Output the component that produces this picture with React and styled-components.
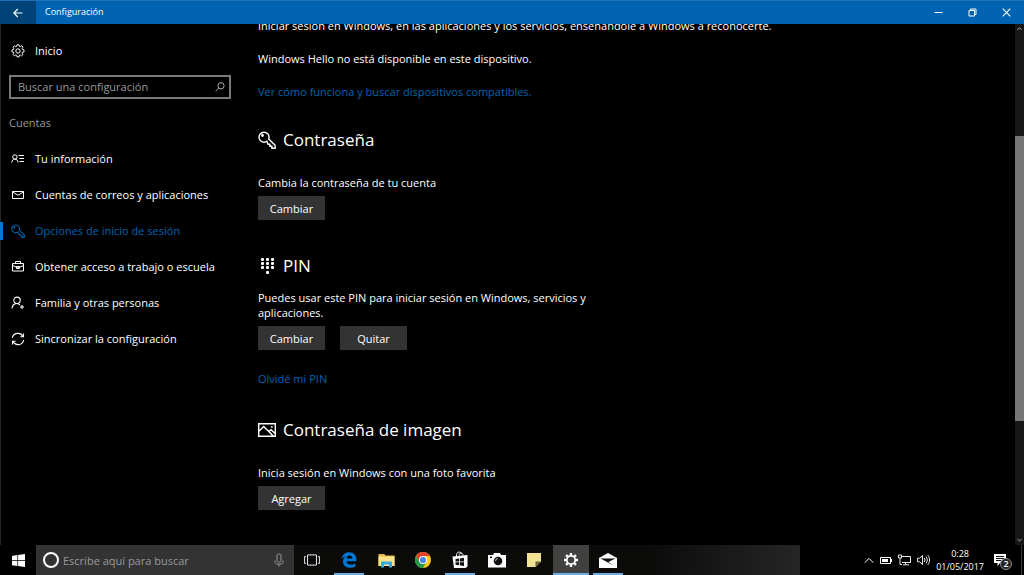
import React from "react";
import styled, { createGlobalStyle } from "styled-components";

const navItems = [
    { label: "Tu información", icon: <InfoIcon /> },
    { label: "Cuentas de correos y aplicaciones", icon: <EnvelopeIcon /> },
    { label: "Opciones de inicio de sesión", icon: <KeyIcon />, active: true },
    { label: "Obtener acceso a trabajo o escuela", icon: <BriefcaseIcon /> },
    { label: "Familia y otras personas", icon: <PersonAddIcon /> },
    { label: "Sincronizar la configuración", icon: <SyncIcon /> },
];

const apps = [
    { name: "Microsoft Edge", icon: <EdgeIcon />, open: true },
    { name: "Explorador de archivos", icon: <FolderIcon /> },
    { name: "Google Chrome", icon: <ChromeIcon /> },
    { name: "Tienda", icon: <StoreIcon />, open: true },
    { name: "Cámara", icon: <CameraIcon /> },
    { name: "Notas rápidas", icon: <NoteIcon /> },
    { name: "Configuración", icon: <CogIcon />, open: true, focused: true },
    { name: "Correo", icon: <MailAppIcon />, open: true },
];

export default function App() {
    return (
        <Desktop>
            <GlobalStyle />
            <TitleBar>
                <BackButton aria-label="Atrás"><BackIcon /></BackButton>
                <Title>Configuración</Title>
                <WindowButton aria-label="Minimizar"><MinimizeIcon /></WindowButton>
                <WindowButton aria-label="Restaurar"><RestoreIcon /></WindowButton>
                <WindowButton aria-label="Cerrar"><CloseIcon /></WindowButton>
            </TitleBar>
            <Body>
                <Sidebar>
                    <NavLink href="#inicio"><GearIcon /><span>Inicio</span></NavLink>
                    <SearchBox>
                        <input type="text" aria-label="Buscar una configuración" placeholder="Buscar una configuración" />
                        <SearchIcon />
                    </SearchBox>
                    <Category>Cuentas</Category>
                    <nav>
                        {navItems.map(i =>
                            <NavLink key={i.label} href="#cuentas" $active={i.active}>{i.icon}<span>{i.label}</span></NavLink>
                        )}
                    </nav>
                </Sidebar>
                <Main>
                    <Hello>
                        <Text $wide>Iniciar sesión en Windows, en las aplicaciones y los servicios, enseñándole a Windows a reconocerte.</Text>
                        <Text>Windows Hello no está disponible en este dispositivo.</Text>
                        <Link href="#hello">Ver cómo funciona y buscar dispositivos compatibles.</Link>
                    </Hello>
                    <Section>
                        <Heading><KeyIcon />Contraseña</Heading>
                        <Text>Cambia la contraseña de tu cuenta</Text>
                        <Actions><Button>Cambiar</Button></Actions>
                    </Section>
                    <Section $compact>
                        <Heading><KeypadIcon />PIN</Heading>
                        <Text>Puedes usar este PIN para iniciar sesión en Windows, servicios y aplicaciones.</Text>
                        <Actions><Button>Cambiar</Button><Button>Quitar</Button></Actions>
                        <Link href="#pin">Olvidé mi PIN</Link>
                    </Section>
                    <Section>
                        <Heading><PictureIcon />Contraseña de imagen</Heading>
                        <Text>Inicia sesión en Windows con una foto favorita</Text>
                        <Actions><Button>Agregar</Button></Actions>
                    </Section>
                </Main>
                <ScrollBar>
                    <ChevronIcon />
                    <ScrollTrack><ScrollThumb /></ScrollTrack>
                    <ChevronIcon down />
                </ScrollBar>
            </Body>
            <TaskBar>
                <StartButton aria-label="Inicio"><WindowsIcon /></StartButton>
                <Cortana>
                    <CortanaRing />
                    <input type="text" aria-label="Escribe aquí para buscar" placeholder="Escribe aquí para buscar" />
                    <MicIcon />
                </Cortana>
                <AppList>
                    <TaskButton aria-label="Vista de tareas"><TaskViewIcon /></TaskButton>
                    {apps.map(a =>
                        <TaskButton key={a.name} aria-label={a.name} $open={a.open} $focused={a.focused}>{a.icon}</TaskButton>
                    )}
                </AppList>
                <Tray>
                    <TrayChevron />
                    <BatteryIcon />
                    <NetworkIcon />
                    <VolumeIcon />
                    <Clock><span>0:28</span><span>01/05/2017</span></Clock>
                    <Notifications aria-label="Notificaciones">
                        <NoticeIcon />
                        <Badge>2</Badge>
                    </Notifications>
                    <ShowDesktop aria-label="Mostrar escritorio" />
                </Tray>
            </TaskBar>
        </Desktop>
    )
}

function BackIcon() {
    return (
        <svg width="10" height="10" viewBox="0 0 10 10" fill="none" stroke="currentColor" strokeWidth="1.1">
            <path d="M.8 5H9.5M4.8 1 .8 5l4 4" />
        </svg>
    )
}

function MinimizeIcon() {
    return (
        <svg width="9" height="9" viewBox="0 0 9 9" stroke="currentColor"><path d="M.5 4.5h8" /></svg>
    )
}

function RestoreIcon() {
    return (
        <svg width="9" height="9" viewBox="0 0 9 9" fill="none" stroke="currentColor">
            <path d="M1 2.5h5.5v5.5H1zM2.5 2.5V1h5.5v5.5H6.5" />
        </svg>
    )
}

function CloseIcon() {
    return (
        <svg width="9" height="9" viewBox="0 0 9 9" stroke="currentColor" strokeWidth="1.1"><path d="m.7.7 7.6 7.6M8.3.7.7 8.3" /></svg>
    )
}

function GearIcon() {
    return (
        <svg viewBox="0 0 14 14" fill="none" stroke="currentColor">
            <circle cx="7" cy="7" r="2.2" />
            <path d="m5.7 2.3.3-1.5h2l.3 1.5 1 .4 1.3-.9 1.4 1.4-.9 1.3.4 1 1.5.4v2l-1.5.3-.4 1 .9 1.3-1.4 1.4-1.3-.9-1 .4-.3 1.5H6l-.3-1.5-1-.4-1.3.9L2 10.5l.9-1.3-.4-1L1 7.9v-2l1.5-.4.4-1L2 3.2l1.4-1.4 1.3.9z" />
        </svg>
    )
}

function SearchIcon() {
    return (
        <svg width="10" height="10" viewBox="0 0 10 10" fill="none" stroke="#aaa">
            <circle cx="6" cy="3.8" r="3.1" />
            <path d="M3.8 6 .5 9.3" />
        </svg>
    )
}

function InfoIcon() {
    return (
        <svg viewBox="0 0 14 14" fill="none" stroke="currentColor">
            <circle cx="3.9" cy="5" r="2.2" />
            <path d="M.8 10.5c0-4.5 6.2-4.5 6.2 0M7.5 3.500H13M8.500 6.500H13M8.500 9.500H13" />
        </svg>
    )
}

function EnvelopeIcon() {
    return (
        <svg viewBox="0 0 14 14" fill="none" stroke="currentColor">
            <path d="M1.5 3.5h11v7h-11zM1.5 4 7 7.2 12.5 4" />
        </svg>
    )
}

function KeyIcon() {
    return (
        <svg viewBox="0 0 18 18" fill="none" stroke="currentColor" strokeWidth="1.4">
            <path d="M8.9 10.3A5 5 0 1 1 10.7 8l6.4 6.2v3h-3.2v-2h-2v-2h-1.8z" />
            <circle cx="4.5" cy="4.5" r=".7" fill="currentColor" />
        </svg>
    )
}

function BriefcaseIcon() {
    return (
        <svg viewBox="0 0 14 14" fill="none" stroke="currentColor">
            <path d="M1.500 3.500h11v7.500h-11zM4.500 3.500v-2h5v2M1.500 5.500l4 1.700h3l4-1.700M5.500 6.500h3v2h-3z" />
        </svg>
    )
}

function PersonAddIcon() {
    return (
        <svg viewBox="0 0 14 14" fill="none" stroke="currentColor" strokeWidth="1.1">
            <circle cx="6" cy="4.3" r="3.2" />
            <path d="M1 12.5C1.5 6.5 7.5 6.5 9 9.3M11 9v4M9 11h4" />
        </svg>
    )
}

function SyncIcon() {
    return (
        <svg viewBox="0 0 14 14" fill="none" stroke="currentColor" strokeWidth="1.1">
            <path d="M1.3 6A5.7 5.7 0 0 1 12 4.5M12.7 8A5.7 5.7 0 0 1 2 9.5M12.5 1.5v3.2H9.3M1.5 12.5V9.3h3.2" />
        </svg>
    )
}

function KeypadIcon() {
    return (
        <svg viewBox="0 0 18 18" fill="currentColor">
            {[3, 8, 13].map(x => [1, 5, 9].map(y => <rect key={x + "-" + y} x={x} y={y} width="3" height="3" rx="1" />))}
            <rect x="8" y="14" width="3" height="3" rx="1" />
        </svg>
    )
}

function PictureIcon() {
    return (
        <svg viewBox="0 0 18 18" fill="none" stroke="currentColor" strokeWidth="1.4">
            <path d="M.7 2.7h16.6v12.6H.7zM.7 10.5l5-5 9.8 9.8M10.800 10.600l2.200-1.800 4.300 4" />
            <circle cx="13.8" cy="6" r=".3" />
        </svg>
    )
}

function ChevronIcon({ down }) {
    return (
        <svg width="5" height="5" viewBox="0 0 5 5" fill="none" stroke="#aaa">
            <path d={down ? "m.4 1 2.1 2.1L4.6 1" : "m.4 3.8 2.1-2.1 2.1 2.1"} />
        </svg>
    )
}

function WindowsIcon() {
    return (
        <svg width="13" height="13" viewBox="0 0 13 13" fill="#fff">
            <path d="m0 1.9 5.400-.8v5.100H0zM6.100 1 13 0v6.200H6.100zM0 6.900h5.400V12L0 11.200zM6.100 6.900H13V13l-6.900-1z" />
        </svg>
    )
}

function MicIcon() {
    return (
        <svg width="10" height="14" viewBox="0 0 10 14" fill="none" stroke="#999">
            <rect x="3" y="1" width="4" height="8" rx="1.5" />
            <path d="M1 7.500v1.700c0 1 .9 1.800 2 1.800h4c1.100 0 2-.8 2-1.800V7.500M5 11v2.500" />
        </svg>
    )
}

function TaskViewIcon() {
    return (
        <svg width="16" height="12" viewBox="0 0 16 12" fill="none" stroke="#e6e6e6">
            <path d="M3.500.9h9v10.200h-9zM2 2.500H.6v7H2M14 2.500h1.400v7H14" />
        </svg>
    )
}

function EdgeIcon() {
    return (
        <svg width="16" height="16" viewBox="0 0 16 16" fill="#0078D7">
            <path d="M.6 7.100C1.200 2.900 4.300.3 8.200.3c4.400 0 7.200 3.100 7.200 7.300v1.700H5.500c.1 2.400 2 3.500 4.400 3.500 1.600 0 3.100-.4 4.500-1.300v3.100c-1.500.8-3.200 1.200-5.200 1.200-4.300 0-7.200-2.500-7.200-6.300 0-2.300 1.200-4.300 3.300-5.400C3.300 4.500 1.700 5.500.6 7.100zm5-.7h5.800c0-1.900-1.100-2.900-2.800-2.900-1.600 0-2.700 1.200-3 2.900z" />
        </svg>
    )
}

function FolderIcon() {
    return (
        <svg width="17" height="15" viewBox="0 0 17 15">
            <path fill="#e8b94b" d="M.5 1h6l1 1.500h9V13H.5z" />
            <path fill="#fae38d" d="M.5 3.500h16V13H.5z" />
            <path fill="#38a9e4" d="M3 14.500V8.500h11v6h-3v-3H6v3z" />
        </svg>
    )
}

function ChromeIcon() {
    return (
        <svg width="16" height="16" viewBox="0 0 16 16">
            <circle cx="8" cy="8" r="8" fill="#fbc920" />
            <path fill="#e24133" d="M8 4h6.930A8 8 0 0 0 1.070 4L4.500 10z" />
            <path fill="#24984c" d="M1.070 4A8 8 0 0 0 8 16l3.500-6h-7z" />
            <circle cx="8" cy="8" r="4" fill="#fff" />
            <circle cx="8" cy="8" r="3.1" fill="#4a86e8" />
        </svg>
    )
}

function StoreIcon() {
    return (
        <svg width="16" height="18" viewBox="0 0 16 18">
            <path fill="none" stroke="#fff" d="M4.500 6V3.500C5 .5 9 .2 9.500 3M7 4.500c.5-3.500 4-3 4 0" />
            <path fill="#fff" d="M.5 5.500 15.500 4v11.500L13.500 17H2z" />
            <path fill="#111" d="m3.500 8 3.500-.5v3H3.500zM7.800 7.400 12 6.800v3.700H7.800zM3.500 11.200H7v3l-3.500-.4zM7.800 11.200H12v3.700l-4.200-.6z" />
        </svg>
    )
}

function CameraIcon() {
    return (
        <svg width="18" height="15" viewBox="0 0 18 15">
            <path fill="#fff" d="M0 2h5l1-2h6l1 2h5v12.500H0z" />
            <circle cx="10" cy="8" r="4.3" fill="#111" />
            <path fill="none" stroke="#fff" strokeWidth=".7" d="M7.500 8A2.500 2.500 0 0 1 10 5.500" />
            <path fill="#111" d="M2 3.500h2v1.500H2z" />
        </svg>
    )
}

function NoteIcon() {
    return (
        <svg width="14" height="14" viewBox="0 0 14 14">
            <path fill="#f2e394" d="M0 0h14v8.500L8.500 14H0z" />
            <path fill="#6c653c" d="M14 8.500 8.500 14v-5.500z" />
        </svg>
    )
}

function CogIcon() {
    return (
        <svg width="14" height="14" viewBox="0 0 14 14" fill="none" stroke="#fff">
            <circle cx="7" cy="7" r="4.2" strokeWidth="1.800" />
            <path strokeWidth="2.4" d="M7 0v2.500M7 11.500V14M0 7h2.500M11.500 7H14M2.050 2.050l1.600 1.600M10.350 10.350l1.600 1.600M2.050 11.950l1.600-1.600M10.350 3.650l1.600-1.600" />
        </svg>
    )
}

function MailAppIcon() {
    return (
        <svg width="18" height="15" viewBox="0 0 18 15">
            <path fill="#fff" d="M0 5 9 0l9 5v10H0z" />
            <path fill="#111" d="M1.500 5.500h15L9.500 9l5 3.500z" />
        </svg>
    )
}

function TrayChevron() {
    return (
        <svg width="10" height="7" viewBox="0 0 10 7" fill="none" stroke="#fff"><path d="M.7 5.7 5 1.4l4.3 4.3" /></svg>
    )
}

function BatteryIcon() {
    return (
        <svg width="12" height="7" viewBox="0 0 12 7">
            <path fill="none" stroke="#fff" d="M.5.5h10v6H.5z" />
            <path fill="#fff" d="M2 2h6v3H2zM11 2h1v3h-1z" />
        </svg>
    )
}

function NetworkIcon() {
    return (
        <svg width="13" height="12" viewBox="0 0 13 12" fill="none" stroke="#eee">
            <path d="M4 2.500h8.500v6H4M7.500 8.500v2M5 10.800h6M.5 1h3v3h-3zM2 4v6.500h2" />
        </svg>
    )
}

function VolumeIcon() {
    return (
        <svg width="13" height="12" viewBox="0 0 13 12" fill="none" stroke="#eee">
            <path d="M.6 4.200h2L5.500 1.500v9L2.600 7.800h-2zM7.200 4c1 1.200 1 2.800 0 4M9 2.600c1.700 2 1.700 4.800 0 6.800M10.800 1.200c2.300 2.800 2.300 6.800 0 9.600" />
        </svg>
    )
}

function NoticeIcon() {
    return (
        <svg width="12" height="12" viewBox="0 0 12 12">
            <path fill="#fff" d="M0 0h12v9H6l-2.500 3V9H0z" />
            <path stroke="#111" d="M2 2.500h8M2 4.500h8M2 6.500h5" />
        </svg>
    )
}

const GlobalStyle = createGlobalStyle`
    *{
        box-sizing: border-box;
    }
    body{
        margin: 0;
        background-color: #000000;
    }
    body, input, button{
        font-family: 'Open Sans', 'Noto Sans', sans-serif;
        font-size: 11px;
        line-height: 15px;
        color: #FFFFFF;
    }
    button{
        border: 0;
        padding: 0;
        background: none;
    }
    input{
        flex: 1;
        min-width: 0;
        border: 0;
        padding: 0;
        outline: 0;
        background: none;
    }
    a{
        text-decoration: none;
    }
    p, h1, h2{
        margin: 0;
        font-weight: 400;
    }
    svg{
        flex-shrink: 0;
        display: block;
    }
`;

const Desktop = styled.div`
    height: 100vh;
    display: flex;
    flex-direction: column;
`;

const TitleBar = styled.header`
    height: 24px;
    flex-shrink: 0;
    display: flex;
    align-items: stretch;
    padding-right: 1px;
    background-color: #0063B1;
    border-top: 1px solid #1A73B9;
`;

const BackButton = styled.button`
    width: 36px;
    display: flex;
    align-items: center;
    justify-content: center;
    background-color: #004376;
`;

const Title = styled.h1`
    flex: 1;
    padding-left: 9px;
    font-size: 9px;
    line-height: 22px;
`;

const WindowButton = styled.button`
    width: 34px;
    display: flex;
    align-items: center;
    justify-content: center;
`;

const Body = styled.div`
    flex: 1;
    min-height: 0;
    display: flex;
`;

const Sidebar = styled.aside`
    width: 240px;
    flex-shrink: 0;
    padding-top: 9px;
    border-left: 1px solid #262626;
`;

const NavLink = styled.a`
    height: 36px;
    display: flex;
    align-items: center;
    gap: 10px;
    margin-left: -1px;
    padding-left: 11px;
    color: ${props => props.$active ? "#0063B1" : "#FFFFFF"};
    background: linear-gradient(#0078D7, #0078D7) no-repeat 0 center / ${props => props.$active ? "3px 18px" : "0 0"};
    svg{
        width: 14px;
        height: 14px;
    }
    span{
        padding-bottom: 2px;
    }
`;

const SearchBox = styled.div`
    height: 24px;
    display: flex;
    align-items: center;
    margin: 6px 9px 0 8px;
    padding: 0 4px 0 7px;
    border: 2px solid #7A7A7A;
    input{
        padding-bottom: 2px;
    }
    input::placeholder{
        color: #999999;
        opacity: 1;
    }
`;

const Category = styled.h2`
    padding: 16px 0 11px 8px;
    font-size: 11px;
    color: #999999;
`;

const Main = styled.main`
    flex: 1;
    min-width: 0;
    overflow: hidden;
    padding-left: 18px;
`;

const Hello = styled.section`
    display: flex;
    flex-direction: column;
    align-items: flex-start;
    gap: 18px;
    margin-top: -6px;
    & + section{
        padding-top: 29px;
    }
`;

const Section = styled.section`
    display: flex;
    flex-direction: column;
    align-items: flex-start;
    padding-top: ${props => props.$compact ? "34px" : "32px"};
    h2{
        margin-bottom: ${props => props.$compact ? "12px" : "23px"};
    }
`;

const Heading = styled.h2`
    display: flex;
    align-items: center;
    gap: 7px;
    font-size: 17px;
    line-height: 24px;
    svg{
        width: 18px;
        height: 18px;
    }
`;

const Text = styled.p`
    max-width: ${props => props.$wide ? "none" : "330px"};
`;

const Link = styled.a`
    color: #0063B1;
`;

const Actions = styled.div`
    display: flex;
    gap: 15px;
    padding-top: 6px;
    & + a{
        margin-top: 21px;
    }
`;

const Button = styled.button`
    width: 67px;
    height: 24px;
    background-color: #333333;
`;

const ScrollBar = styled.div`
    width: 9px;
    display: flex;
    flex-direction: column;
    align-items: center;
    padding: 2px 0;
    background-color: #171717;
`;

const ScrollTrack = styled.div`
    flex: 1;
    width: 100%;
    display: flex;
    flex-direction: column;
    padding-top: 105px;
`;

const ScrollThumb = styled.div`
    height: 71%;
    background-color: #767676;
`;

const TaskBar = styled.footer`
    height: 30px;
    flex-shrink: 0;
    display: flex;
`;

const StartButton = styled.button`
    width: 36px;
    display: flex;
    align-items: center;
    justify-content: center;
`;

const Cortana = styled.div`
    width: 258px;
    display: flex;
    align-items: center;
    padding: 0 10px 0 7px;
    background-color: #333333;
    input::placeholder{
        color: #999999;
        opacity: 1;
    }
`;

const CortanaRing = styled.span`
    width: 16px;
    height: 16px;
    margin-right: 4px;
    border: 2px solid #FFFFFF;
    border-radius: 50%;
`;

const AppList = styled.div`
    width: 506px;
    display: flex;
    gap: 1px;
    background: linear-gradient(90deg, #0B0C0A 70%, #252525);
`;

const TaskButton = styled.button`
    width: 36px;
    display: flex;
    align-items: center;
    justify-content: center;
    background: linear-gradient(#65AEE6, #65AEE6) no-repeat center bottom;
    background-size: ${props => props.$focused ? "100%" : "30px"} ${props => props.$open ? "2px" : "0"};
    background-color: ${props => props.$focused ? "#414140" : "transparent"};
`;

const Tray = styled.div`
    flex: 1;
    display: flex;
    align-items: center;
    justify-content: flex-end;
    gap: 6px;
`;

const Clock = styled.div`
    display: flex;
    flex-direction: column;
    align-items: center;
    font-size: 9px;
    line-height: 13px;
`;

const Notifications = styled.button`
    position: relative;
    margin: 0 9px 0 4px;
`;

const Badge = styled.span`
    position: absolute;
    left: 6px;
    top: 4px;
    width: 12px;
    height: 12px;
    border: 1px solid #8A8A8A;
    border-radius: 50%;
    background-color: #222222;
    font-size: 9px;
    font-weight: 600;
    line-height: 10px;
`;

const ShowDesktop = styled.button`
    align-self: stretch;
    width: 3px;
    border-left: 1px solid #3A3A3A;
`;
